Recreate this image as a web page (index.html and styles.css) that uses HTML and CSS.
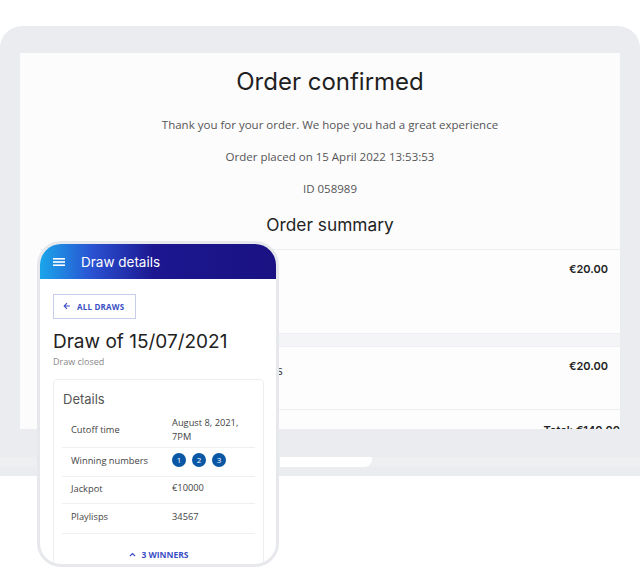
FILE: index.html
```html
<!DOCTYPE html>
<html lang="en">
<head>
  <meta charset="UTF-8">
  <title>Order confirmed</title>
  <link rel="stylesheet" href="styles.css">
</head>
<body>
  <div class="scene">
    <div class="laptop">
      <div class="screen">
        <div class="page">
          <h1>Order confirmed</h1>
          <p class="note">Thank you for your order. We hope you had a great experience</p>
          <p class="note">Order placed on 15 April 2022 13:53:53</p>
          <p class="note">ID 058989</p>
          <h2>Order summary</h2>
          <div class="items">
            <div class="item">
              <span class="item-name"></span>
              <span class="price">€20.00</span>
            </div>
            <div class="item">
              <span class="item-name">Playslips</span>
              <span class="price">€20.00</span>
            </div>
            <div class="total">Total: €140.00</div>
          </div>
        </div>
      </div>
      <div class="base">
        <div class="notch"></div>
      </div>
    </div>

    <div class="phone">
      <div class="appbar">
        <svg class="menu-icon" width="12" height="10" viewBox="0 0 12 10">
          <rect x="0" y="1" width="12" height="1.6" fill="#fff"/>
          <rect x="0" y="4.2" width="12" height="1.6" fill="#fff"/>
          <rect x="0" y="7.4" width="12" height="1.6" fill="#fff"/>
        </svg>
        <span class="appbar-title">Draw details</span>
      </div>
      <div class="phone-body">
        <div class="back-btn">
          <svg width="8" height="8" viewBox="0 0 8 8">
            <path d="M7 4H1.5M4 1.2L1.2 4L4 6.8" stroke="#3b4fc4" stroke-width="1.1" fill="none"/>
          </svg>
          <span>ALL DRAWS</span>
        </div>
        <h3 class="draw-title">Draw of 15/07/2021</h3>
        <div class="draw-status">Draw closed</div>
        <div class="card">
          <div class="card-title">Details</div>
          <div class="detail-row row-cutoff">
            <span class="detail-label">Cutoff time</span>
            <span class="detail-value">August 8, 2021,<br>7PM</span>
          </div>
          <div class="detail-row">
            <span class="detail-label">Winning numbers</span>
            <span class="detail-value balls">
              <span class="ball">1</span>
              <span class="ball">2</span>
              <span class="ball">3</span>
            </span>
          </div>
          <div class="detail-row row-short">
            <span class="detail-label">Jackpot</span>
            <span class="detail-value">€10000</span>
          </div>
          <div class="detail-row row-last">
            <span class="detail-label">Playlisps</span>
            <span class="detail-value">34567</span>
          </div>
          <div class="winners">
            <svg width="7" height="5" viewBox="0 0 7 5">
              <path d="M1 4L3.5 1.5L6 4" stroke="#3b4fc4" stroke-width="1.2" fill="none"/>
            </svg>
            <span>3 WINNERS</span>
          </div>
        </div>
      </div>
    </div>
  </div>
</body>
</html>
```

FILE: styles.css
```css
body {
  margin: 0;
  padding: 0;
  background: #fff;
  font-family: "Open Sans", sans-serif;
  color: #333;
}
.scene {
  position: relative;
  width: 640px;
  height: 585px;
  overflow: hidden;
  padding-top: 26px;
  box-sizing: border-box;
}

/* laptop */
.laptop {
  background: #ebecef;
  border-radius: 22px 22px 0 0;
  height: 450px;
  padding-top: 27px;
  box-sizing: border-box;
}
.screen {
  margin: 0 20px;
  height: 376px;
  background: #fcfcfd;
  overflow: hidden;
}
.base {
  margin-top: 28px;
  height: 10px;
  background: #eeeff1;
}
.notch {
  margin-left: 280px;
  width: 92px;
  height: 10px;
  background: #fff;
  border-radius: 0 0 8px 0;
}

/* order page */
.page {
  width: 620px;
  text-align: center;
  padding-top: 14px;
}
h1 {
  margin: 0;
  font-family: Inter, sans-serif;
  font-weight: 400;
  font-size: 24px;
  line-height: 30px;
  color: #1f1f1f;
}
.note {
  margin: 16px 0 0;
  font-size: 11.5px;
  line-height: 16px;
  color: #555;
}
h1 + .note {
  margin-top: 20px;
}
h2 {
  margin: 16px 0 0;
  font-family: Inter, sans-serif;
  font-weight: 400;
  font-size: 17.3px;
  line-height: 24px;
  color: #1f1f1f;
}
.items {
  margin: 12px 20px 0;
  background: #f4f5f7;
  text-align: left;
}
.item {
  display: flex;
  justify-content: space-between;
  align-items: flex-start;
  background: #fdfdfe;
  border-top: 1px solid #eceef1;
  border-bottom: 1px solid #eceef1;
  height: 85px;
  box-sizing: border-box;
  padding: 11px 12px 0 195px;
  margin-bottom: 12px;
}
.item + .item {
  height: 64px;
  margin-bottom: 0;
}
.item-name {
  font-size: 12px;
  line-height: 16px;
  color: #333;
  padding-top: 5px;
}
.price {
  font-family: Inter, sans-serif;
  font-weight: 600;
  font-size: 11px;
  line-height: 16px;
  color: #222;
}
.total {
  background: #fdfdfe;
  height: 40px;
  padding: 13px 0 0;
  box-sizing: border-box;
  text-align: right;
  font-family: Inter, sans-serif;
  font-weight: 600;
  font-size: 11px;
  color: #222;
}

/* phone mockup */
.phone {
  position: absolute;
  left: 37px;
  top: 241px;
  width: 242px;
  height: 326px;
  box-sizing: border-box;
  border: 3px solid #e6e8ec;
  border-radius: 24px;
  background: #fff;
  overflow: hidden;
}
.appbar {
  height: 35px;
  display: flex;
  align-items: center;
  gap: 16px;
  padding-left: 13px;
  background: linear-gradient(90deg, #1aa6ea 0%, #2a52d2 22%, #1c1790 48%, #1a1283 100%);
}
.menu-icon {
  display: block;
}
.appbar-title {
  font-family: Inter, sans-serif;
  font-size: 13.5px;
  color: #fff;
}
.phone-body {
  padding: 14px 13px 0;
}
.back-btn {
  display: inline-flex;
  align-items: center;
  gap: 6px;
  height: 25px;
  width: 83px;
  box-sizing: border-box;
  padding-left: 9px;
  border: 1px solid #c8cdeb;
  font-size: 8px;
  font-weight: 700;
  color: #3b4fc4;
  letter-spacing: 0.2px;
}
.back-btn svg {
  display: block;
}
.draw-title {
  margin: 11px 0 0;
  font-family: Inter, sans-serif;
  font-weight: 400;
  font-size: 19px;
  line-height: 24px;
  color: #222;
}
.draw-status {
  margin-top: 2px;
  font-size: 9px;
  line-height: 12px;
  color: #888;
}
.card {
  margin-top: 11px;
  width: 211px;
  box-sizing: border-box;
  border: 1px solid #eceef2;
  border-radius: 4px;
  padding: 0 8px;
}
.card-title {
  font-family: Inter, sans-serif;
  font-size: 13px;
  line-height: 18px;
  color: #555;
  padding: 10px 0 6px 1px;
}
.detail-row {
  display: flex;
  align-items: center;
  height: 29px;
  box-sizing: border-box;
  padding-bottom: 3px;
  border-bottom: 1px solid #eef0f3;
  font-size: 9.3px;
  color: #444;
}
.row-cutoff {
  height: 34px;
  padding-bottom: 1px;
}
.row-short {
  height: 27px;
}
.row-last {
  height: 30px;
}
.detail-label {
  width: 101px;
  padding-left: 9px;
  flex-shrink: 0;
}
.detail-value {
  line-height: 14px;
}
.balls {
  display: flex;
  gap: 6px;
}
.ball {
  width: 14px;
  height: 14px;
  border-radius: 50%;
  background: #0a57a6;
  color: #fff;
  font-size: 8px;
  display: flex;
  align-items: center;
  justify-content: center;
}
.winners {
  display: flex;
  align-items: center;
  justify-content: center;
  gap: 6px;
  padding: 15px 0 10px;
  font-size: 8.5px;
  font-weight: 700;
  color: #3b4fc4;
}
```
